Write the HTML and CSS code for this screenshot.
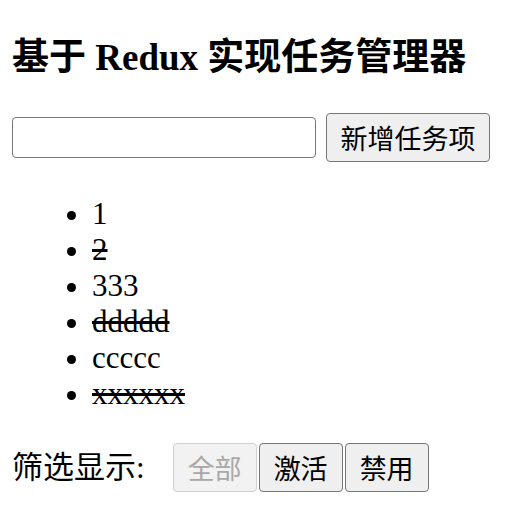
FILE: index.html
```html
<!DOCTYPE html>
<html lang="zh">
<head>
<meta charset="utf-8">
<link rel="stylesheet" href="styles.css">
</head>
<body>
<h2 class="title">基于 Redux 实现任务管理器</h2>
<div class="add-row">
  <input class="task-input" type="text">
  <button class="btn btn-add">新增任务项</button>
</div>
<ul class="task-list">
  <li>1</li>
  <li class="done">2</li>
  <li>333</li>
  <li class="done">ddddd</li>
  <li>ccccc</li>
  <li class="done">xxxxxx</li>
</ul>
<div class="filter-row">
  <span class="filter-label">筛选显示:</span>
  <button class="btn btn-filter" disabled>全部</button>
  <button class="btn btn-filter">激活</button>
  <button class="btn btn-filter">禁用</button>
</div>
</body>
</html>
```
FILE: styles.css
```css
body {
  margin: 12px;
  font-family: "Liberation Serif", "Noto Sans CJK SC", serif;
  font-size: 31px;
  color: #000;
  background: #fff;
}
.title {
  font-size: 37px;
  font-weight: bold;
  margin: 25px 0 34px;
  line-height: 42px;
}
.add-row {
  display: flex;
  align-items: center;
  gap: 10px;
}
.task-input {
  width: 304px;
  height: 41px;
  box-sizing: border-box;
  border: 1.5px solid #767676;
  border-radius: 4px;
  margin: 0;
  padding: 0;
}
.btn {
  font-family: "Noto Sans CJK SC", "Liberation Sans", sans-serif;
  font-size: 27px;
  background: #efefef;
  border: 1.5px solid #767676;
  border-radius: 4px;
  color: #000;
  margin: 0;
  height: 49px;
  box-sizing: border-box;
  padding: 0 8px;
  line-height: 1;
}
.btn-add {
  width: 164px;
}
.btn:disabled {
  color: #a8a8a8;
  border-color: #cfcfcf;
  background: #f2f2f2;
}
.task-list {
  margin: 34px 0 31px;
  padding-left: 80px;
  list-style: disc;
}
.task-list li {
  line-height: 36px;
}
.done {
  text-decoration: line-through;
}
.filter-row {
  display: flex;
  align-items: center;
  gap: 2px;
}
.filter-label {
  margin-right: 26px;
  line-height: 49px;
}
.btn-filter {
  width: 84px;
  padding: 0;
}
```
